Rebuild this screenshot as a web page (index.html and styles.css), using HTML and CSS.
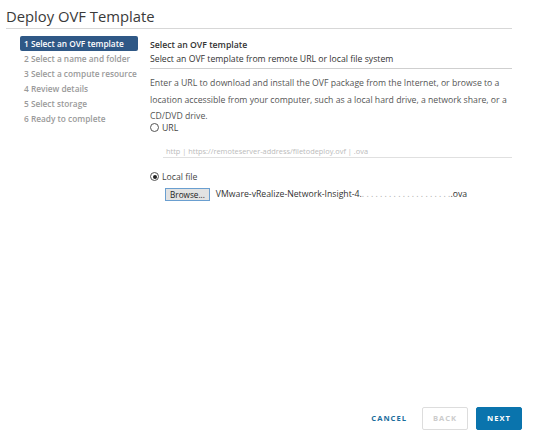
FILE: index.html
```html
<!DOCTYPE html>
<html>
<head>
<meta charset="utf-8">
<link rel="stylesheet" href="styles.css">
</head>
<body>
<div class="dialog">
  <h1 class="title">Deploy OVF Template</h1>
  <div class="main">
    <ul class="steps">
      <li class="step active">1 Select an OVF template</li>
      <li class="step">2 Select a name and folder</li>
      <li class="step">3 Select a compute resource</li>
      <li class="step">4 Review details</li>
      <li class="step">5 Select storage</li>
      <li class="step">6 Ready to complete</li>
    </ul>
    <div class="content">
      <div class="head">
        <div class="head-title">Select an OVF template</div>
        <div class="head-sub">Select an OVF template from remote URL or local file system</div>
      </div>
      <p class="desc">Enter a URL to download and install the OVF package from the Internet, or browse to a location accessible from your computer, such as a local hard drive, a network share, or a CD/DVD drive.</p>
      <label class="radio"><span class="dot"></span>URL</label>
      <div class="url-input">http | https://remoteserver-address/filetodeploy.ovf | .ova</div>
      <label class="radio checked"><span class="dot"></span>Local file</label>
      <div class="file-row">
        <span class="browse">Browse...</span>
        <span class="fname">VMware-vRealize-Network-Insight-4.<span class="blur">. . . . . .  . . . . . .  . .  . . . . .  .</span>.ova</span>
      </div>
    </div>
  </div>
  <div class="footer">
    <span class="btn link">CANCEL</span>
    <span class="btn outline">BACK</span>
    <span class="btn primary">NEXT</span>
  </div>
</div>
</body>
</html>
```
FILE: styles.css
```css
* { box-sizing: border-box; }
html, body { margin: 0; padding: 0; background: #fff; }
body {
  font-family: "Open Sans", "Liberation Sans", sans-serif;
  color: #333;
  width: 534px;
  height: 435px;
}
.dialog {
  height: 435px;
  display: flex;
  flex-direction: column;
  padding: 6px 22px 0 6px;
}
.title {
  margin: 0;
  font-size: 14.8px;
  font-weight: 400;
  color: #3a3a3a;
  line-height: 20px;
  padding-bottom: 2px;
  border-bottom: 1px solid #d7d7d7;
}
.main {
  display: flex;
  padding-top: 7px;
  flex: 1;
}
.steps {
  list-style: none;
  margin: 0 0 0 14px;
  padding: 0;
  width: 118px;
  flex: none;
}
.step {
  font-size: 8.3px;
  font-weight: 600;
  color: #9a9a9a;
  height: 15px;
  line-height: 15px;
  padding-left: 4px;
  white-space: nowrap;
}
.step.active {
  background: #2f5886;
  color: #fff;
  border-radius: 2px;
}
.content {
  flex: 1;
  margin-left: 12px;
  font-size: 8.7px;
  color: #444;
}
.head {
  padding-top: 2px;
  padding-bottom: 2px;
  border-bottom: 1px solid #cfcfcf;
}
.head-title {
  font-weight: 600;
  color: #333;
  line-height: 14px;
}
.head-sub {
  line-height: 14px;
  color: #333;
}
.desc {
  margin: 6px 0 0;
  line-height: 16.5px;
  color: #555;
}
.radio {
  display: flex;
  align-items: center;
  height: 12px;
  margin-top: -3px;
  color: #444;
}
.radio.checked { margin-top: 1px; }
.dot {
  width: 9px;
  height: 9px;
  border: 1px solid #555;
  border-radius: 50%;
  margin-right: 3px;
  flex: none;
  position: relative;
}
.radio.checked .dot::after {
  content: "";
  position: absolute;
  left: 1.5px;
  top: 1.5px;
  width: 4px;
  height: 4px;
  border-radius: 50%;
  background: #222;
}
.url-input {
  margin: 11px 0 13px 13px;
  padding: 1px 0 1px 3px;
  border-bottom: 1px solid #e0e0e0;
  font-size: 7.4px;
  color: #bbb;
  line-height: 10px;
}
.file-row {
  display: flex;
  align-items: center;
  margin: 5px 0 0 15px;
}
.browse {
  font-size: 8.2px;
  background: #e2e2e2;
  border: 1px solid #6a9fd0;
  color: #222;
  padding: 0 4px;
  height: 13px;
  line-height: 11px;
  margin-right: 6px;
}
.fname {
  color: #333;
  white-space: nowrap;
}
.blur { color: #aaa; }
.footer {
  display: flex;
  justify-content: flex-end;
  align-items: center;
  gap: 8px;
  padding: 0 0 5px 0;
  margin-right: -10px;
}
.btn {
  font-size: 7.6px;
  font-weight: 700;
  letter-spacing: 1px;
  height: 23px;
  line-height: 21px;
  width: 46px;
  text-align: center;
  border-radius: 2px;
  border: 1px solid transparent;
}
.btn.link { color: #1a6d9c; width: auto; margin-right: 6px; }
.btn.outline { border-color: #ddd; color: #ccc; }
.btn.primary { background: #0a74ad; color: #fff; border-color: #0a74ad; }
```
